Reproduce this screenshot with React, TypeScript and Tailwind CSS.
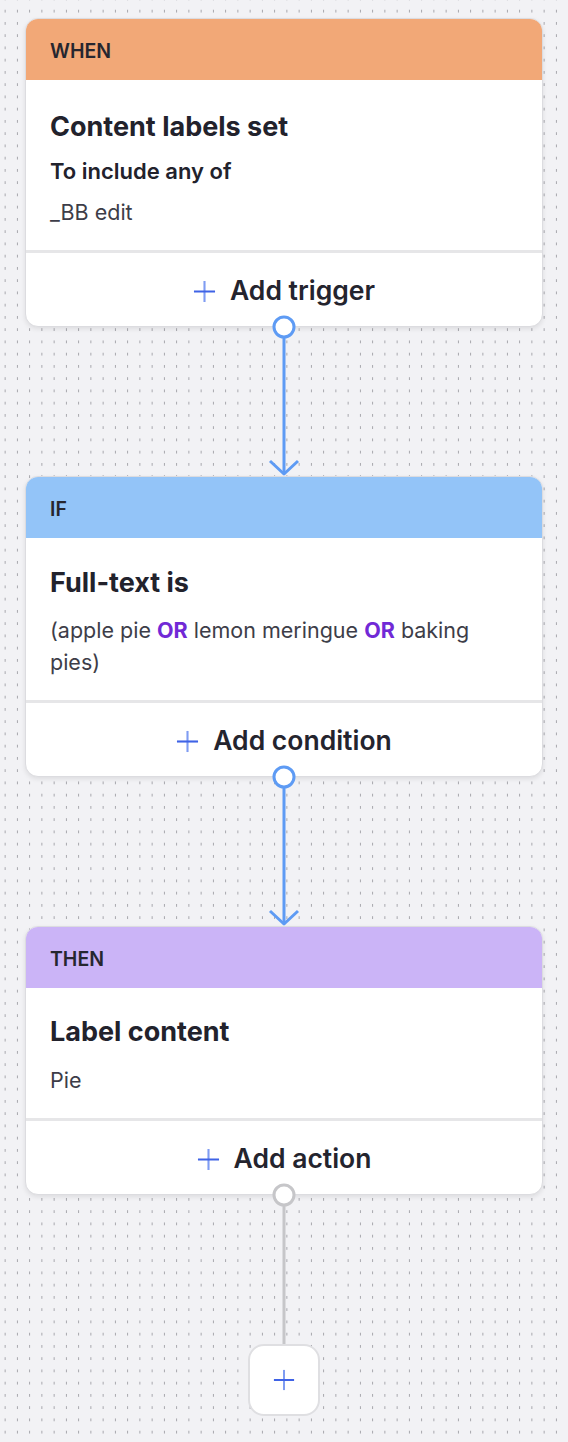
import type { ReactNode } from 'react'

const FONT = "font-['Inter','Noto_Sans',sans-serif]"

function PlusIcon({ className = 'h-[23px] w-[23px]' }: { className?: string }) {
  return (
    <svg viewBox="0 0 24 24" className={className} fill="none" stroke="#3f63e6" strokeWidth={2.2} strokeLinecap="butt">
      <line x1="12" y1="1" x2="12" y2="23" stroke="#7f9cf2" />
      <line x1="1" y1="12" x2="23" y2="12" />
    </svg>
  )
}

type CardProps = {
  label: string
  headerClass: string
  bodyClass: string
  footer: string
  children: ReactNode
}

function StepCard({ label, headerClass, bodyClass, footer, children }: CardProps) {
  return (
    <div className="overflow-hidden rounded-[13px] border border-[#dcdce0] bg-white shadow-[0_2px_5px_rgba(0,0,0,0.09)]">
      <div className={`flex h-[61px] items-center px-[24px] pt-[5px] ${headerClass}`}>
        <span className="text-[19.5px] font-semibold text-[#26262f]">{label}</span>
      </div>
      <div className={`flex flex-col px-[24px] ${bodyClass}`}>{children}</div>
      <div className="h-[3px] bg-[#e6e6e8]" />
      <button className="flex h-[73px] w-full items-center justify-center gap-[14px] pt-[3px]">
        <PlusIcon />
        <span className="text-[26.5px] font-semibold text-[#24242e]">{footer}</span>
      </button>
    </div>
  )
}

// line from the node on the card above down into the next card (or the add button)
function Connector({ muted = false }: { muted?: boolean }) {
  const stroke = muted ? '#c6c6c9' : '#5e9bf4'
  return (
    <div className="relative h-[149px] w-full">
      <svg
        width="40"
        height="162"
        viewBox="0 0 40 162"
        className="absolute -top-[12px] left-1/2 -translate-x-1/2"
        fill="none"
      >
        <line x1="20" y1="23" x2="20" y2={muted ? 161 : 159} stroke={stroke} strokeWidth={3} />
        {!muted && <polyline points="6,146 20,159 34,146" stroke={stroke} strokeWidth={3} strokeLinejoin="round" />}
        <circle cx="20" cy="12" r="10" fill="#fff" stroke={stroke} strokeWidth={3} />
      </svg>
    </div>
  )
}

export default function App() {
  return (
    <div
      className={`${FONT} min-h-[1442px] w-full bg-[#f2f2f5] bg-[radial-gradient(ellipse_0.9px_1.8px_at_50%_50%,#a2a2a8_70%,transparent_100%)] bg-[length:12.25px_12.25px] bg-[position:-1px_5px] px-[25px] pt-[18px] pb-[24px]`}
    >
      <StepCard label="WHEN" headerClass="bg-[#f2a877]" bodyClass="h-[170px] pt-[30px]" footer="Add trigger">
        <p className="text-[27px] leading-[34px] font-bold text-[#22222c]">Content labels set</p>
        <p className="mt-[13px] text-[22px] leading-[28px] font-semibold text-[#22222c]">To include any of</p>
        <p className="mt-[13px] text-[21.5px] leading-[28px] text-[#3d3d48]">_BB edit</p>
      </StepCard>

      <Connector />

      <StepCard label="IF" headerClass="bg-[#93c4f8]" bodyClass="h-[162px] pt-[28px]" footer="Add condition">
        <p className="text-[27px] leading-[34px] font-bold text-[#22222c]">Full-text is</p>
        <p className="mt-[14px] text-[21.5px] leading-[32px] text-[#3d3d48]">
          (apple pie <span className="font-bold text-[#7129d6]">OR</span> lemon meringue{' '}
          <span className="font-bold text-[#7129d6]">OR</span> baking pies)
        </p>
      </StepCard>

      <Connector />

      <StepCard label="THEN" headerClass="bg-[#cbb4f7]" bodyClass="h-[130px] pt-[27px]" footer="Add action">
        <p className="text-[27px] leading-[34px] font-bold text-[#22222c]">Label content</p>
        <p className="mt-[17px] text-[21.5px] leading-[28px] text-[#3d3d48]">Pie</p>
      </StepCard>

      <Connector muted />

      <div className="flex justify-center">
        <button className="flex h-[72px] w-[72px] items-center justify-center rounded-[16px] border-2 border-[#dfdfe2] bg-white">
          <PlusIcon className="h-[22px] w-[22px]" />
        </button>
      </div>
    </div>
  )
}
